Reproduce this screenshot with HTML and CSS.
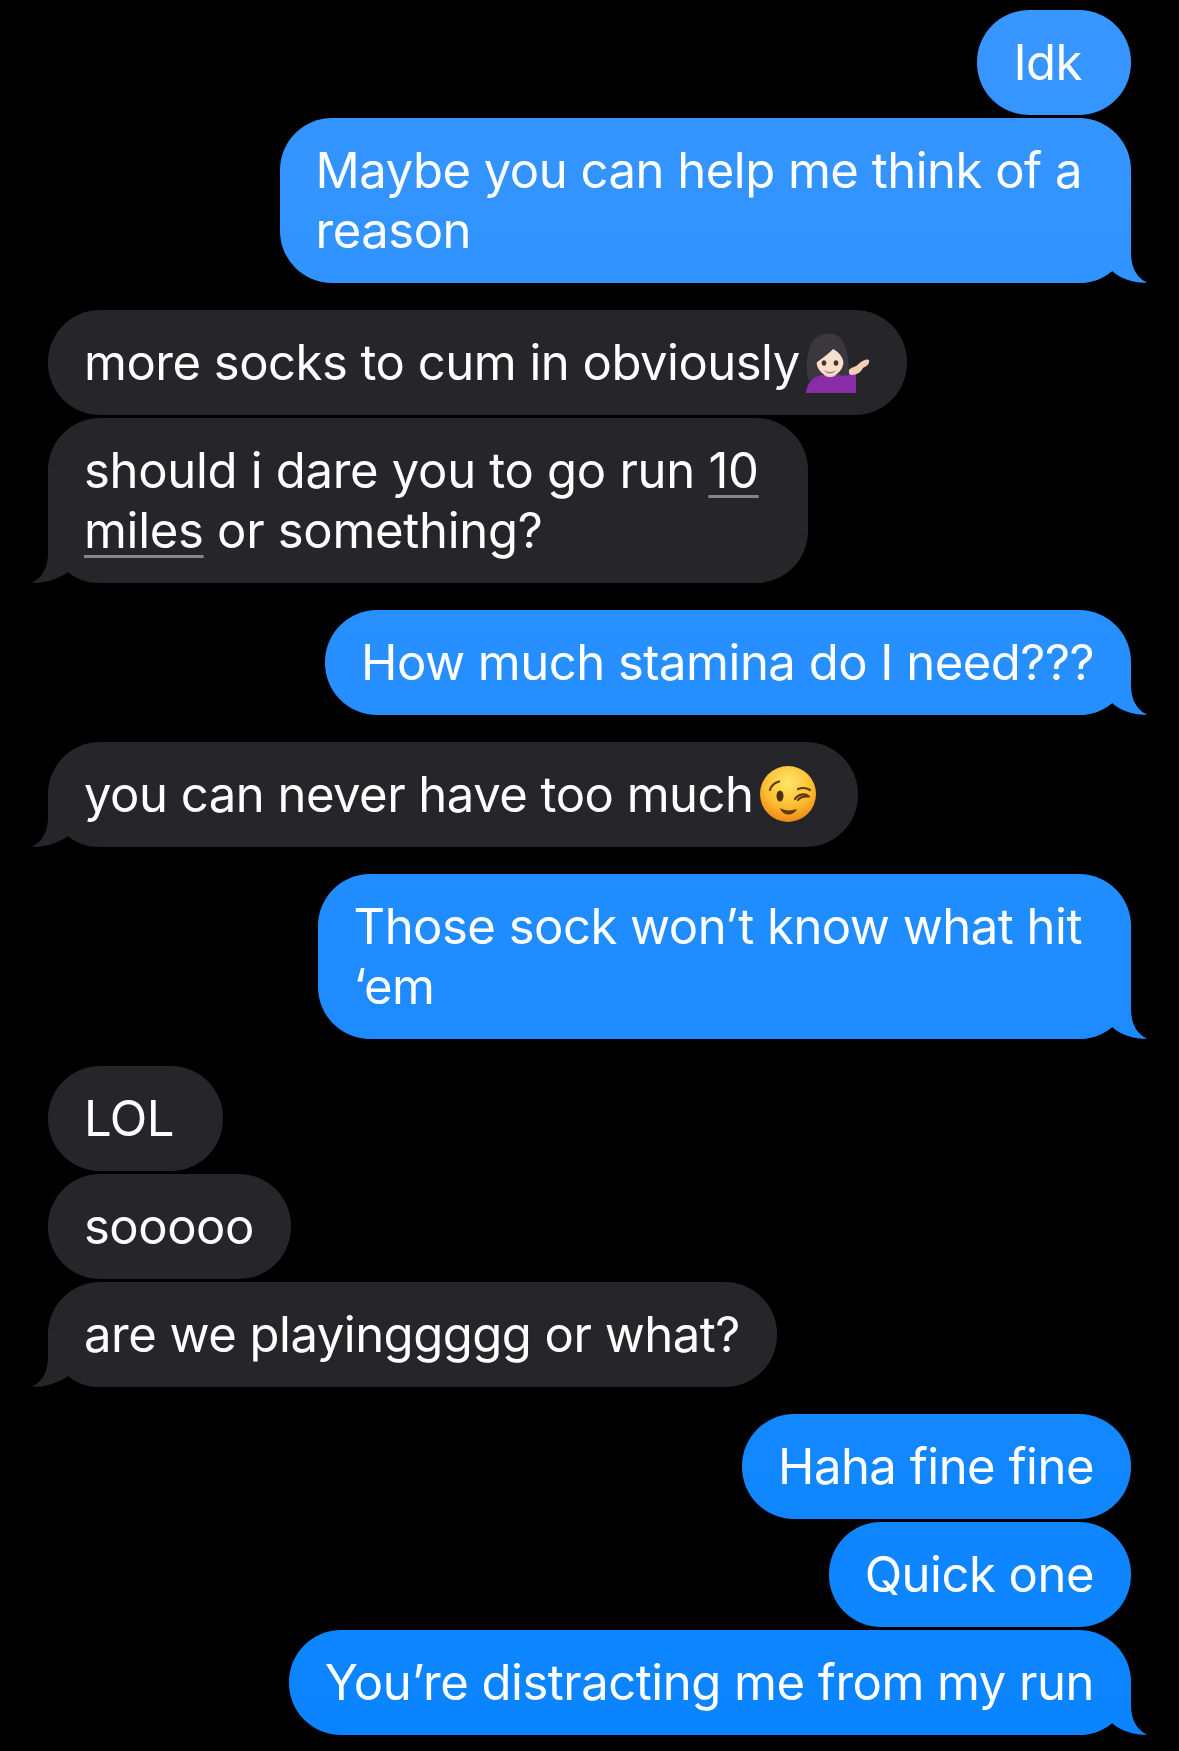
FILE: index.html
```html
<!DOCTYPE html>
<html lang="en">
<head>
<meta charset="utf-8">
<title>Messages</title>
<link rel="stylesheet" href="styles.css">
</head>
<body>
<main class="thread">
  <section class="group out">
    <p class="bubble trail">Idk</p>
    <p class="bubble trail tail">Maybe you can help me think of a<br>reason</p>
  </section>
  <section class="group in">
    <p class="bubble">more socks to cum in obviously<svg class="emoji person" viewBox="0 0 66 60" aria-hidden="true"><path d="M4 47C1 30 3 8 15 3c8-4 17-3 22 3 7 9 9 26 7 41z" fill="#3a383d"/><path d="M2 60c1-10 6-16 16-18h16c3 1 7 1 10 0l8-3v21z" fill="#8a2ba8"/><path d="M19 38h14l-1 4c-3 3-9 3-12 0z" fill="#e8c3ae"/><ellipse cx="26" cy="28" rx="13.500" ry="15" fill="#f7dfcf"/><path d="M12 30c-1-11 4-20 14-20s15 9 14 20c-2-7-5-11-11-14-4 5-11 9-17 14z" fill="#3a383d"/><ellipse cx="20" cy="30" rx="2.300" ry="2.700" fill="#53321f"/><ellipse cx="32" cy="30" rx="2.300" ry="2.700" fill="#53321f"/><path d="M20 37c3 2.500 9 2.500 12 0-2 4.500-10 4.500-12 0z" fill="#a87c6c"/><path d="M45 40c-1-5 3-5 7-7 2-1 5-5 9-6 3-1 5 0 4 2 0 3-4 5-6 6-2 4-6 7-11 7-2 0-3-1-3-2z" fill="#f4cdb4"/></svg></p>
    <p class="bubble trail tail tuned">should i dare you to go run <span class="link">10</span><br><span class="link">miles</span> or something?</p>
  </section>
  <section class="group out">
    <p class="bubble tail">How much stamina do I need???</p>
  </section>
  <section class="group in">
    <p class="bubble tail">you can never have too much<svg class="emoji wink" viewBox="0 0 56 56" aria-hidden="true"><defs><radialGradient id="face" cx="50%" cy="30%" r="72%"><stop offset="0" stop-color="#ffe667"/><stop offset=".6" stop-color="#fdbd30"/><stop offset="1" stop-color="#ee8412"/></radialGradient></defs><circle cx="28" cy="28" r="28" fill="url(#face)"/><ellipse cx="20" cy="30" rx="3.500" ry="5.500" fill="#4c2e10"/><path d="M10 24c1-4 4-7 9-8.500" fill="none" stroke="#5e3b12" stroke-width="2.200" stroke-linecap="round"/><path d="M38 23c4-1.500 8-1.500 12 1M35 33c3-5 10-6 14-2.500-4-.5-8 0-11 3.500" fill="none" stroke="#5e3b12" stroke-width="2.200" stroke-linecap="round" stroke-linejoin="round"/><path d="M20 42c5 3 11 3 17 1-3 7-14 8-17-1z" fill="#5e3b12"/></svg></p>
  </section>
  <section class="group out">
    <p class="bubble trail tail">Those sock won’t know what hit<br>‘em</p>
  </section>
  <section class="group in">
    <p class="bubble trail">LOL</p>
    <p class="bubble">sooooo</p>
    <p class="bubble tail">are we playinggggg or what?</p>
  </section>
  <section class="group out">
    <p class="bubble">Haha fine fine</p>
    <p class="bubble">Quick one</p>
    <p class="bubble tail">You’re distracting me from my run</p>
  </section>
</main>
</body>
</html>
```
FILE: styles.css
```css
* { box-sizing: border-box; }
html, body { margin: 0; background: #000; }
body { height: 1751px; overflow: hidden; }
.thread {
  isolation: isolate;
  display: flex;
  flex-direction: column;
  gap: 27px;
  padding: 10px 48px 0;
  font-family: Inter, "Noto Sans", sans-serif;
  font-size: 49px;
  letter-spacing: -0.5px;
  line-height: 60px;
  color: #fff;
}
.group { display: flex; flex-direction: column; gap: 3px; }
.group.out { align-items: flex-end; }
.group.in { align-items: flex-start; }
.bubble {
  position: relative;
  margin: 0;
  padding: 23px 37px 22px 36px;
  border-radius: 52px;
  white-space: nowrap;
}
.bubble.trail { padding-right: 49px; }
.bubble.tuned { letter-spacing: -0.3px; }
.in .bubble { background: #26252a; }
.out .bubble, .out .tail::after {
  background: linear-gradient(#3896ff 0, #0a84ff 1751px) fixed;
}
.tail::after {
  content: "";
  position: absolute;
  z-index: -1;
  bottom: 0;
  width: 68px;
  height: 52px;
}
.out .tail::after {
  right: -16px;
  clip-path: path("M52 0L52 22C52 34 56 46 68 51.500C60 52.500 44 50 33 40C25 47 14 52 0 52L0 0Z");
}
.in .tail::after {
  left: -18px;
  clip-path: path("M18 0L18 22C18 34 14 46 2 51.500C10 52.500 26 50 38 41C45 47 56 52 68 52L68 0Z");
  background: #26252a;
}
.link {
  text-decoration: underline;
  text-decoration-color: #85858a;
  text-decoration-thickness: 3px;
  text-decoration-skip-ink: none;
  text-underline-offset: 7px;
}
.emoji { display: inline-block; vertical-align: top; }
.person { width: 66px; height: 60px; margin: 0 0 0 4px; }
.wink { width: 56px; height: 56px; margin: 1px 5px 0 6px; }
```
